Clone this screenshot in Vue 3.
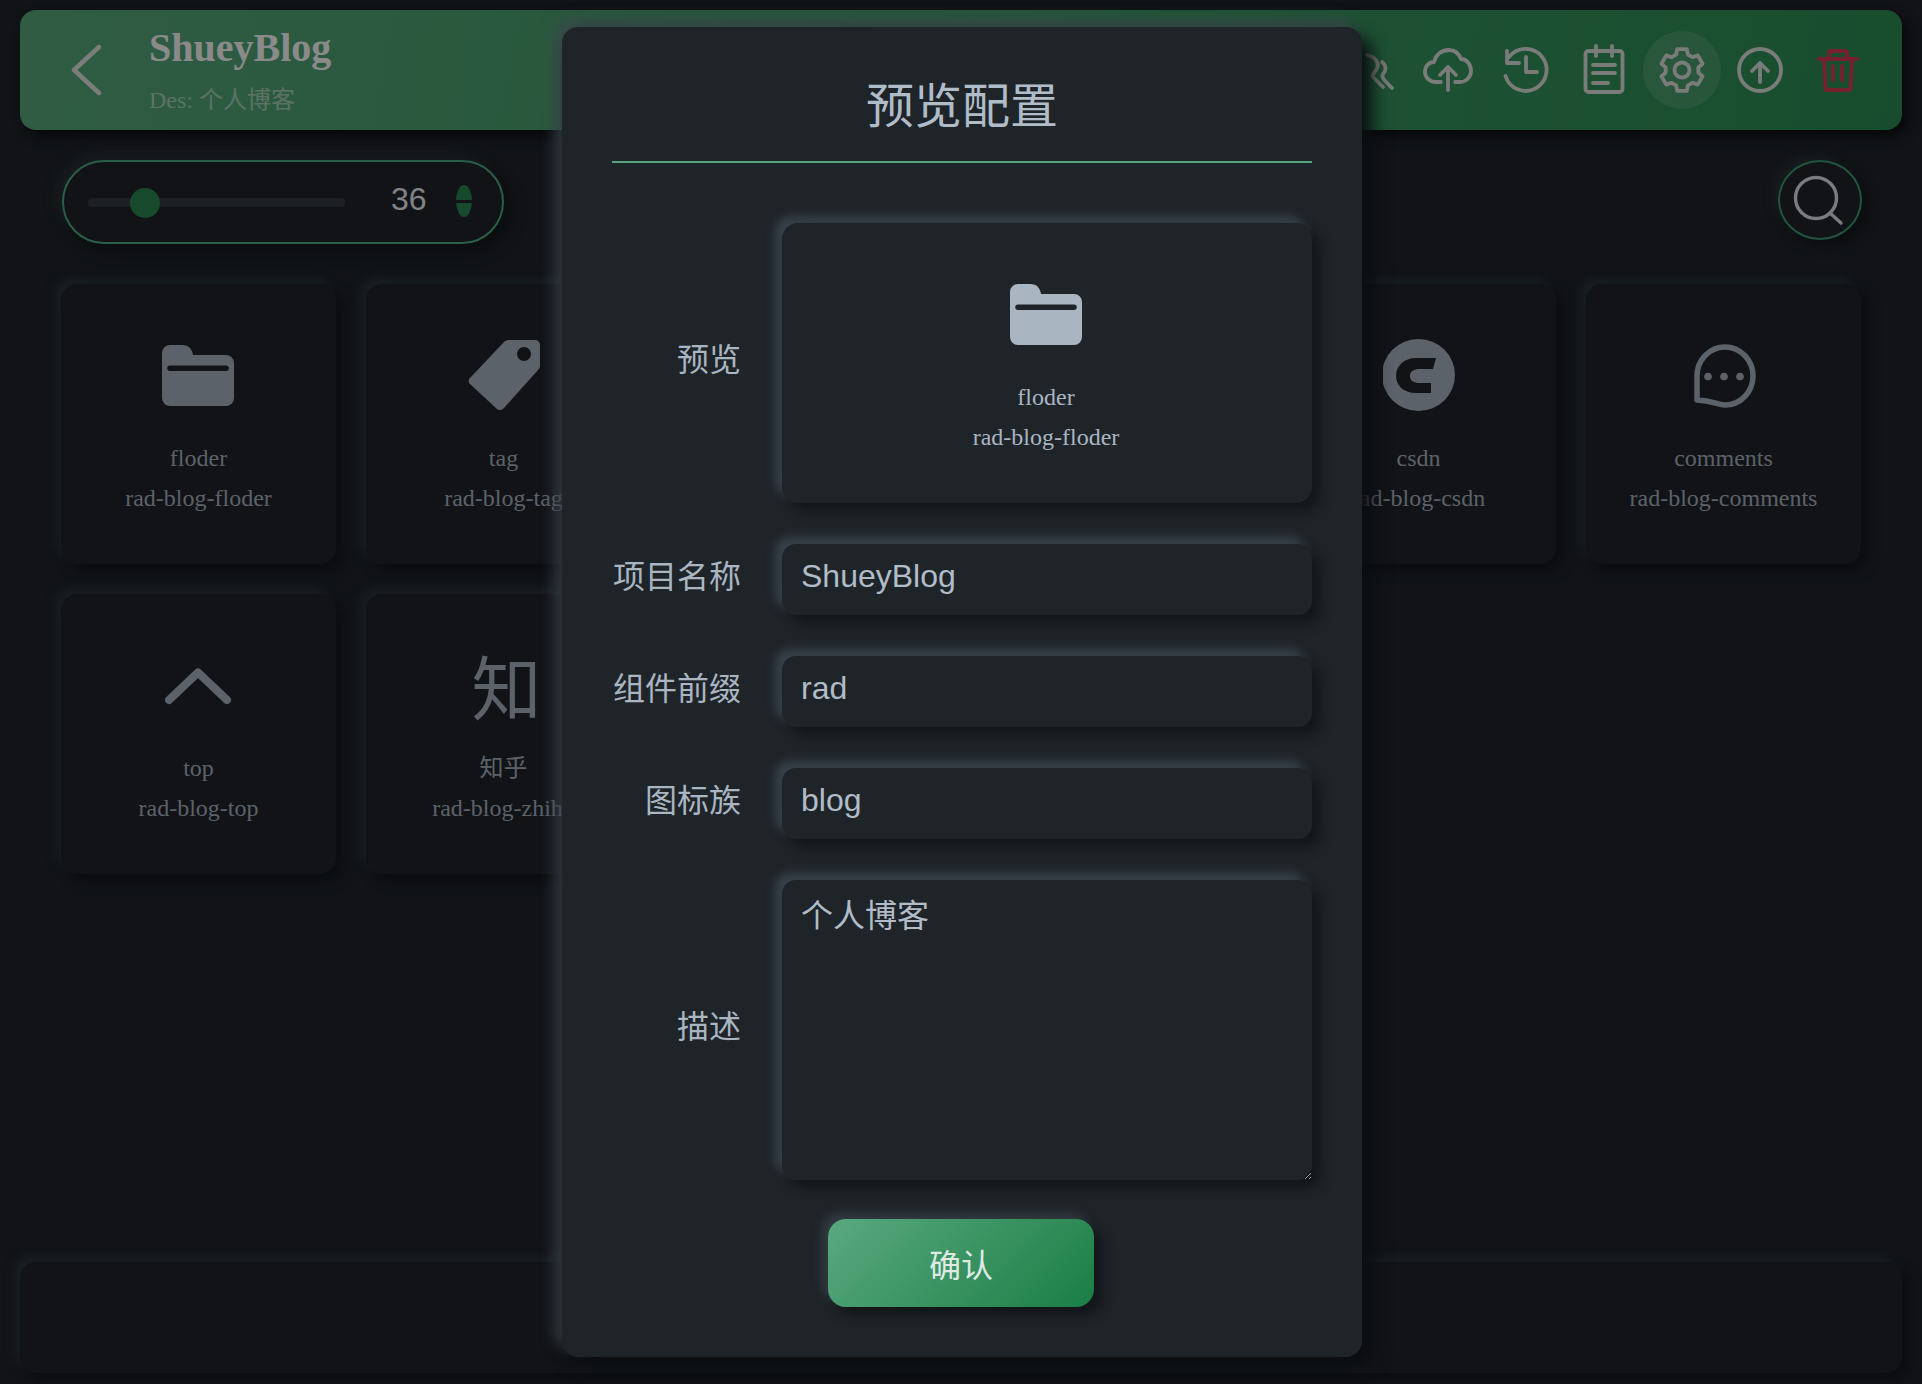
<script setup>
import { computed } from 'vue'

const size = 36
const thumbLeft = computed(() => ((size - 12) / 108) * 100 + '%')

const gearPath = (() => {
  const pts = []
  const pt = (deg, r) => {
    const a = (deg * Math.PI) / 180
    return (24 + r * Math.cos(a)).toFixed(2) + ' ' + (24 + r * Math.sin(a)).toFixed(2)
  }
  for (let i = 0; i < 6; i++) {
    const a = -90 + 60 * i
    pts.push(pt(a - 13, 21.5), pt(a + 13, 21.5), pt(a + 21, 16.5), pt(a + 39, 16.5))
  }
  return 'M' + pts.join(' L') + ' Z'
})()

const firstRow = [
  { key: 'floder', title: 'floder', cls: 'rad-blog-floder' },
  { key: 'tag', title: 'tag', cls: 'rad-blog-tag' },
  { key: 'a', title: '', cls: '' },
  { key: 'b', title: '', cls: '' },
  { key: 'csdn', title: 'csdn', cls: 'rad-blog-csdn' },
  { key: 'comments', title: 'comments', cls: 'rad-blog-comments' },
  { key: 'top', title: 'top', cls: 'rad-blog-top' },
  { key: 'zhi', title: '知乎', cls: 'rad-blog-zhihu' }
]
</script>

<template>
  <div class="page">
    <header class="topbar">
      <svg class="back" viewBox="0 0 32 52" fill="none" stroke="currentColor" stroke-width="4.5" stroke-linecap="round" stroke-linejoin="round">
        <path d="M28 3 L3 26 L28 49" />
      </svg>
      <div class="heading">
        <div class="name">ShueyBlog</div>
        <div class="des">Des: 个人博客</div>
      </div>
      <div class="tools">
        <span class="tool">
          <svg viewBox="0 0 48 48"><path d="M21 9 C30 11 34 18 30 24 C28 27 26 28 27 31 L37 41" /><path d="M36 16 C41 20 40 25 37 28 C35 31 37 33 46 42" /></svg>
        </span>
        <span class="tool">
          <svg viewBox="0 0 48 48"><path d="M17 36 H12 C5 36 1 31 1 26 C1 20 5 16 10 16 C12 8 18 4 25 4 C31 4 35 8 37 13 C43 13 47 19 47 25 C47 31 42 36 36 36 H31" /><path d="M24 44 V21 M16 29 L24 21 L32 29" /></svg>
        </span>
        <span class="tool">
          <svg viewBox="0 0 48 48"><path d="M7 11 A21 21 0 1 1 3.5 30" /><path d="M5 5 V17 H17" /><path d="M24 11 V26 H35" /></svg>
        </span>
        <span class="tool">
          <svg viewBox="0 0 48 48"><rect x="5.5" y="5" width="37" height="41" rx="3" /><path d="M16 0 V10 M32 0 V10" /><path d="M13 19 H35 M13 27 H35 M13 37 H28" /></svg>
        </span>
        <span class="tool active">
          <svg viewBox="0 0 48 48"><path :d="gearPath" /><circle cx="24" cy="24" r="7.5" /></svg>
        </span>
        <span class="tool">
          <svg viewBox="0 0 48 48"><circle cx="24" cy="24" r="21" /><path d="M24 36 V17 M16 25 L24 17 L32 25" /></svg>
        </span>
        <span class="tool danger">
          <svg viewBox="0 0 48 48"><path d="M5 13 H43" /><path d="M15 13 V7 A2 2 0 0 1 17 5 H31 A2 2 0 0 1 33 7 V13" /><path d="M10 13 L11.5 42 A2 2 0 0 0 13.5 44 H34.5 A2 2 0 0 0 36.5 42 L38 13" /><path d="M19 20 V34 M28 20 V34" /></svg>
        </span>
      </div>
    </header>

    <section class="toolbar">
      <div class="slider">
        <div class="track">
          <span class="thumb" :style="{ left: thumbLeft }"></span>
        </div>
        <span class="value">{{ size }}</span>
        <span class="spin"></span>
      </div>
      <button class="search" type="button" aria-label="search">
        <svg viewBox="0 0 48 48" fill="none" stroke="currentColor" stroke-width="3.4" stroke-linecap="round">
          <circle cx="20" cy="22" r="20.5" />
          <path d="M34 37 L45 47" />
        </svg>
      </button>
    </section>

    <section class="grid">
      <article v-for="item in firstRow" :key="item.key" class="card">
        <div class="glyph">
          <svg v-if="item.key === 'floder'" class="folder" viewBox="0 0 72 72" fill="currentColor" fill-rule="evenodd">
            <path d="M8 6 H20 C27 6 30 10 31 16 H64 A8 8 0 0 1 72 24 V59 A8 8 0 0 1 64 67 H8 A8 8 0 0 1 0 59 V14 A8 8 0 0 1 8 6 Z M8 26.500 A2.500 2.500 0 0 0 8 32 H64 A2.500 2.500 0 0 0 64 26.500 Z" />
          </svg>
          <svg v-else-if="item.key === 'tag'" viewBox="0 0 72 72" fill="currentColor" fill-rule="evenodd">
            <path d="M41 1 H67 A5 5 0 0 1 72 6 V26 A6 6 0 0 1 70 31 L36 69 A5 5 0 0 1 29 70 L2 45 A4 4 0 0 1 2 39 L36 3 A7 7 0 0 1 41 1 Z M56 8 A7 7 0 1 0 56 22 A7 7 0 1 0 56 8 Z" />
          </svg>
          <svg v-else-if="item.key === 'csdn'" viewBox="0 0 72 72" fill="currentColor" fill-rule="evenodd">
            <path d="M35.500 0 A36.500 36 0 1 0 35.500 72 A36.500 36 0 1 0 35.500 0 Z M53 19 L50 30 H37 C31 30 27 32 27 37 C27 42 31 44 37 44 H48 V54 H33 C20 54 13 46 13 37 C13 27 21 19 33 19 Z" />
          </svg>
          <svg v-else-if="item.key === 'comments'" viewBox="0 0 72 72" fill="none" stroke="currentColor" stroke-width="5.500" stroke-linejoin="round">
            <path d="M9 61 V37 A28 29 0 1 1 37 66 C29 66 25 61.500 9 61 Z" />
            <g fill="currentColor" stroke="none">
              <circle cx="20" cy="37.500" r="3.800" />
              <circle cx="36" cy="37.500" r="3.800" />
              <circle cx="52" cy="37.500" r="3.800" />
            </g>
          </svg>
          <svg v-else-if="item.key === 'top'" viewBox="0 0 72 72" fill="none" stroke="currentColor" stroke-width="8" stroke-linecap="round" stroke-linejoin="round">
            <path d="M6 51 L35 23.500 L64 51" />
          </svg>
          <span v-else-if="item.key === 'zhi'" class="zhi">知</span>
        </div>
        <div class="line">{{ item.title }}</div>
        <div class="line">{{ item.cls }}</div>
      </article>
    </section>

    <footer class="bottombar"></footer>

    <div class="mask">
      <div class="dialog">
        <h2 class="dialog-title">预览配置</h2>
        <form class="form" @submit.prevent>
          <label class="label">预览</label>
          <div class="preview">
            <div class="glyph">
              <svg viewBox="0 0 72 72" fill="currentColor" fill-rule="evenodd">
                <path d="M8 6 H20 C27 6 30 10 31 16 H64 A8 8 0 0 1 72 24 V59 A8 8 0 0 1 64 67 H8 A8 8 0 0 1 0 59 V14 A8 8 0 0 1 8 6 Z M8 26.500 A2.500 2.500 0 0 0 8 32 H64 A2.500 2.500 0 0 0 64 26.500 Z" />
              </svg>
            </div>
            <div class="line">floder</div>
            <div class="line">rad-blog-floder</div>
          </div>

          <label class="label">项目名称</label>
          <input class="field" type="text" value="ShueyBlog" />

          <label class="label">组件前缀</label>
          <input class="field" type="text" value="rad" />

          <label class="label">图标族</label>
          <input class="field" type="text" value="blog" />

          <label class="label">描述</label>
          <textarea class="field area">个人博客</textarea>
        </form>
        <button class="confirm" type="button">确认</button>
      </div>
    </div>
  </div>
</template>

<style>
html, body {
  margin: 0;
  background: #20242a;
  overflow: hidden;
}
</style>

<style scoped>
.page {
  position: relative;
  width: 1922px;
  height: 1384px;
  display: flex;
  flex-direction: column;
  background: #20242a;
  font-family: "Liberation Serif", "Noto Sans CJK SC", serif;
  color: #a9b6c2;
  overflow: hidden;
}

.topbar {
  flex: none;
  height: 120px;
  margin: 10px 20px 0;
  padding: 0 25px 0 51px;
  display: flex;
  align-items: center;
  border-radius: 16px;
  background: linear-gradient(100deg, #58ab7d, #2c8f55);
  box-shadow: 6px 6px 12px #0c0f12;
  color: #e4e8e4;
}
.back {
  flex: none;
  width: 32px;
  height: 52px;
}
.heading {
  margin-left: 46px;
  padding-top: 2px;
}
.name {
  font-size: 40px;
  font-weight: 700;
  line-height: 46px;
  color: #fff;
}
.des {
  margin-top: 12px;
  font-size: 24px;
  line-height: 34px;
  color: rgba(255, 255, 255, 0.5);
}
.tools {
  margin-left: auto;
  display: flex;
}
.tool {
  width: 78px;
  height: 78px;
  display: flex;
  align-items: center;
  justify-content: center;
  border-radius: 50%;
}
.tool svg {
  width: 48px;
  height: 48px;
  fill: none;
  stroke: #dfe5e0;
  stroke-width: 3.8;
  stroke-linecap: round;
  stroke-linejoin: round;
  overflow: visible;
}
.tool.active {
  background: rgba(255, 255, 255, 0.13);
}
.tool.danger svg {
  stroke: #dd3b55;
}

.toolbar {
  flex: none;
  margin-top: 30px;
  padding: 0 60px 0 62px;
  display: flex;
  justify-content: space-between;
}
.slider {
  box-sizing: border-box;
  width: 442px;
  height: 84px;
  padding-left: 24px;
  display: flex;
  align-items: center;
  border: 2px solid #4fae82;
  border-radius: 42px;
  box-shadow: 8px 8px 14px #14191d, -6px -6px 12px #2c353b;
}
.track {
  position: relative;
  flex: none;
  width: 257px;
  height: 9px;
  border-radius: 4px;
  background: #343c43;
}
.thumb {
  position: absolute;
  top: 50%;
  width: 30px;
  height: 30px;
  margin: -14px 0 0 -15px;
  border-radius: 50%;
  background: #2b8a54;
}
.value {
  margin: 0 0 6px 46px;
  font-family: "Liberation Sans", sans-serif;
  font-size: 32px;
  line-height: 40px;
  color: #eef2f6;
}
.spin {
  width: 16px;
  height: 32px;
  margin: 0 0 2px 29px;
  border-radius: 50%;
  background: linear-gradient(#2b8a54 0 46%, transparent 46% 56%, #2b8a54 56%);
}
.search {
  box-sizing: border-box;
  width: 84px;
  height: 80px;
  padding: 0;
  display: flex;
  align-items: center;
  justify-content: center;
  border: 2px solid #3f9a72;
  border-radius: 50%;
  background: transparent;
  box-shadow: 6px 6px 12px #14191d, -5px -5px 10px #2c353b;
  color: #dfe5ea;
}
.search svg {
  flex: none;
  width: 48px;
  height: 48px;
  overflow: visible;
}

.grid {
  flex: none;
  margin-top: 40px;
  padding: 0 60px 0 61px;
  display: grid;
  grid-template-columns: repeat(6, 275px);
  grid-auto-rows: 280px;
  gap: 30px;
}
.card,
.preview {
  box-sizing: border-box;
  padding-top: 55px;
  display: flex;
  flex-direction: column;
  align-items: center;
  border-radius: 16px;
  box-shadow: 7px 7px 12px #14191d, -6px -6px 10px #2e383e;
  font-size: 24px;
}
.glyph {
  flex: none;
  width: 72px;
  height: 72px;
  margin-bottom: 27px;
  color: #a9b6c2;
}
.glyph svg {
  display: block;
  width: 72px;
  height: 72px;
}
.glyph svg.folder {
  margin-left: -1px;
}
.zhi {
  display: block;
  padding-left: 4px;
  font-family: "Noto Sans CJK SC", sans-serif;
  font-size: 70px;
  line-height: 72px;
  text-align: center;
}
.line {
  height: 40px;
  line-height: 40px;
  white-space: nowrap;
  color: #a9b6c2;
}

.bottombar {
  flex: none;
  height: 111px;
  margin: auto 20px 11px;
  border-radius: 16px;
  box-shadow: 7px 7px 12px #14191d, -6px -6px 10px #2e383e;
}

.mask {
  position: absolute;
  inset: 0;
  display: flex;
  align-items: center;
  justify-content: center;
  background: rgba(0, 0, 0, 0.46);
}
.dialog {
  box-sizing: border-box;
  width: 800px;
  height: 1330px;
  margin-left: 2px;
  padding: 0 50px;
  border-radius: 16px;
  background: #1f2429;
  box-shadow: 10px 10px 18px #0b0e10, -8px -8px 14px rgba(62, 72, 80, 0.75);
}
.dialog-title {
  margin: 0;
  padding: 42px 0 26px;
  border-bottom: 2px solid #55a67c;
  font-family: "Noto Sans CJK SC", sans-serif;
  font-size: 48px;
  font-weight: 400;
  line-height: 66px;
  text-align: center;
  color: #b0bcc8;
}
.form {
  margin-top: 60px;
  display: grid;
  grid-template-columns: 129px 530px;
  grid-template-rows: 280px 71px 71px 71px 300px;
  column-gap: 41px;
  row-gap: 41px;
  align-items: center;
}
.label {
  padding-bottom: 12px;
  text-align: right;
  white-space: nowrap;
  font-family: "Noto Sans CJK SC", sans-serif;
  font-size: 32px;
  font-weight: 400;
  line-height: 44px;
  color: #a9b6c2;
}
.preview {
  height: 280px;
  padding-right: 2px;
  box-shadow: 8px 8px 12px #12161a, -7px -7px 10px #38424a;
}
.field {
  box-sizing: border-box;
  width: 530px;
  height: 71px;
  padding: 0 19px 6px;
  border: none;
  outline: none;
  border-radius: 14px;
  background: #1f2429;
  box-shadow: 8px 8px 12px #12161a, -7px -7px 10px #38424a;
  font-family: "Liberation Sans", "Noto Sans CJK SC", sans-serif;
  font-size: 32px;
  color: #b0bcc8;
}
.area {
  display: block;
  height: 300px;
  padding: 12px 19px;
  line-height: 48px;
  resize: vertical;
}
.confirm {
  display: block;
  width: 266px;
  height: 88px;
  margin: 39px 0 0 216px;
  padding: 0;
  border: none;
  border-radius: 18px;
  background: linear-gradient(135deg, #5aa97f, #1a7e45);
  box-shadow: 8px 8px 12px #12161a, -6px -6px 10px #333c43;
  font-family: "Noto Sans CJK SC", sans-serif;
  font-size: 32px;
  font-weight: 400;
  color: #dfeae4;
}
</style>
